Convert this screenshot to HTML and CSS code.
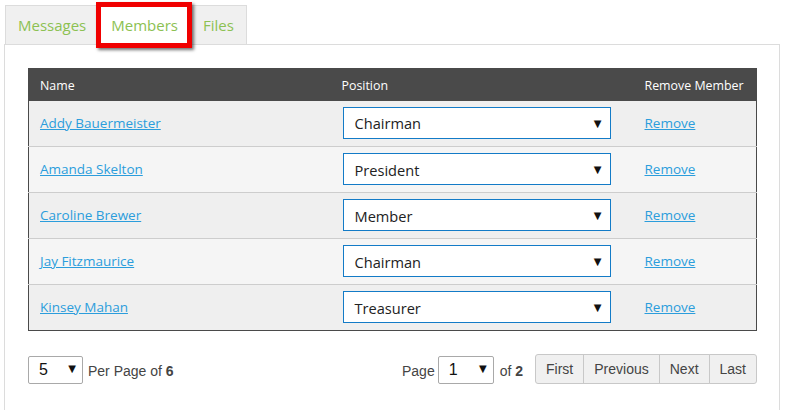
FILE: index.html
```html
<!DOCTYPE html>
<html>
<head>
<meta charset="utf-8">
<link rel="stylesheet" href="styles.css">
</head>
<body>
<div class="page">
  <div class="tabs">
    <div class="tab">Messages</div>
    <div class="tab active">Members</div>
    <div class="tab">Files</div>
  </div>
  <div class="highlight"></div>
  <div class="panel">
    <table class="members">
      <thead>
        <tr><th class="c1">Name</th><th class="c2">Position</th><th class="c3">Remove Member</th></tr>
      </thead>
      <tbody>
        <tr><td class="c1"><a href="#">Addy Bauermeister</a></td><td class="c2"><div class="sel"><span>Chairman</span><span class="arr">▼</span></div></td><td class="c3"><a href="#">Remove</a></td></tr>
        <tr><td class="c1"><a href="#">Amanda Skelton</a></td><td class="c2"><div class="sel"><span>President</span><span class="arr">▼</span></div></td><td class="c3"><a href="#">Remove</a></td></tr>
        <tr><td class="c1"><a href="#">Caroline Brewer</a></td><td class="c2"><div class="sel"><span>Member</span><span class="arr">▼</span></div></td><td class="c3"><a href="#">Remove</a></td></tr>
        <tr><td class="c1"><a href="#">Jay Fitzmaurice</a></td><td class="c2"><div class="sel"><span>Chairman</span><span class="arr">▼</span></div></td><td class="c3"><a href="#">Remove</a></td></tr>
        <tr><td class="c1"><a href="#">Kinsey Mahan</a></td><td class="c2"><div class="sel"><span>Treasurer</span><span class="arr">▼</span></div></td><td class="c3"><a href="#">Remove</a></td></tr>
      </tbody>
    </table>
    <div class="pager">
      <div class="perpage">
        <div class="psel"><span>5</span><span class="arr">▼</span></div>
        <span class="ptext">Per Page of <b>6</b></span>
      </div>
      <div class="pagenav">
        <span class="ptext">Page</span>
        <div class="psel"><span>1</span><span class="arr">▼</span></div>
        <span class="ptext">of <b>2</b></span>
        <div class="btns">
          <button class="btn">First</button><button class="btn">Previous</button><button class="btn">Next</button><button class="btn">Last</button>
        </div>
      </div>
    </div>
  </div>
</div>
</body>
</html>
```
FILE: styles.css
```css
html, body {
  margin: 0;
  padding: 0;
  background: #fff;
}
body {
  font-family: "Open Sans", "Liberation Sans", sans-serif;
  color: #222;
}
.page {
  position: relative;
  padding: 5px 0 0 4px;
  width: 776px;
}
.tabs {
  display: flex;
  padding-left: 1px;
  height: 39px;
}
.tab {
  box-sizing: border-box;
  height: 39px;
  line-height: 39px;
  padding: 0 12px;
  font-size: 15px;
  color: #8cc152;
  background: #f0f0f0;
  border: 1px solid #dcdcdc;
  border-bottom: none;
  margin-right: -1px;
}
.tab.active {
  background: #fff;
  height: 40px;
  position: relative;
  z-index: 1;
}
.highlight {
  position: absolute;
  left: 96px;
  top: 2px;
  width: 86px;
  height: 36px;
  border: 5px solid #f00000;
  box-shadow: 2px 2px 3px rgba(0,0,0,0.55);
  z-index: 3;
}
.panel {
  border: 1px solid #dcdcdc;
  padding: 23px 22px 40px 23px;
}
.members {
  width: 729px;
  border-collapse: collapse;
  border: 1px solid #4a4a4a;
  table-layout: fixed;
}
.members th {
  background: #4a4a4a;
  color: #fff;
  font-size: 12.4px;
  font-weight: 400;
  text-align: left;
  height: 32px;
  padding: 1px 11px 0 11px;
  box-sizing: border-box;
}
.members th.c2 { padding-left: 12px; }
.members th.c3 { padding-left: 12px; }
.members .c1 { width: 301px; }
.members .c2 { width: 303px; }
.members .c3 { width: 124px; }
.members td {
  height: 46px;
  box-sizing: border-box;
  padding: 0 11px 1px 11px;
  border-bottom: 1px solid #cdcdcd;
  font-size: 13.5px;
}
.members tbody tr:nth-child(odd) td { background: #efefef; }
.members tbody tr:nth-child(even) td { background: #f5f5f5; }
.members tbody tr:last-child td { border-bottom: none; }
.members a {
  color: #2b9ddc;
  text-decoration: underline;
}
.members td.c2 { padding-left: 13px; }
.members td.c3 { padding-left: 12px; }
.sel {
  box-sizing: border-box;
  width: 268px;
  height: 32px;
  border: 1px solid #137bc7;
  background: #fff;
  display: flex;
  align-items: center;
  justify-content: space-between;
  padding: 1px 8px 0 11px;
  font-size: 14.6px;
  color: #222;
}
.arr {
  font-size: 10px;
  color: #111;
  font-family: "DejaVu Sans", sans-serif;
}
.pager {
  display: flex;
  justify-content: space-between;
  align-items: center;
  margin-top: 23px;
  font-family: "Liberation Sans", Arial, sans-serif;
}
.perpage, .pagenav {
  display: flex;
  align-items: center;
}
.psel {
  box-sizing: border-box;
  width: 55px;
  height: 28px;
  border: 1px solid #a9a9a9;
  border-radius: 2px;
  background: #fff;
  display: flex;
  align-items: center;
  justify-content: space-between;
  padding: 0 6px 0 10px;
  font-size: 16px;
  color: #111;
  margin-top: 2px;
}
.psel .arr { font-size: 10px; margin-top: -4px; }
.ptext {
  font-size: 14px;
  color: #444;
  margin-top: 4px;
}
.perpage .ptext { margin-left: 5px; }
.pagenav .psel { margin: 2px 6px 0 3px; width: 56px; }
.btns {
  display: flex;
  margin-left: 12px;
}
.btn {
  font-family: "Liberation Sans", Arial, sans-serif;
  font-size: 14px;
  color: #444;
  background: #f0f0f0;
  border: 1px solid #c8c8c8;
  height: 30px;
  padding: 0 10px;
  margin-left: -1px;
  border-radius: 0;
}
.btn:first-child { border-radius: 3px 0 0 3px; margin-left: 0; }
.btn:last-child { border-radius: 0 3px 3px 0; }
```
